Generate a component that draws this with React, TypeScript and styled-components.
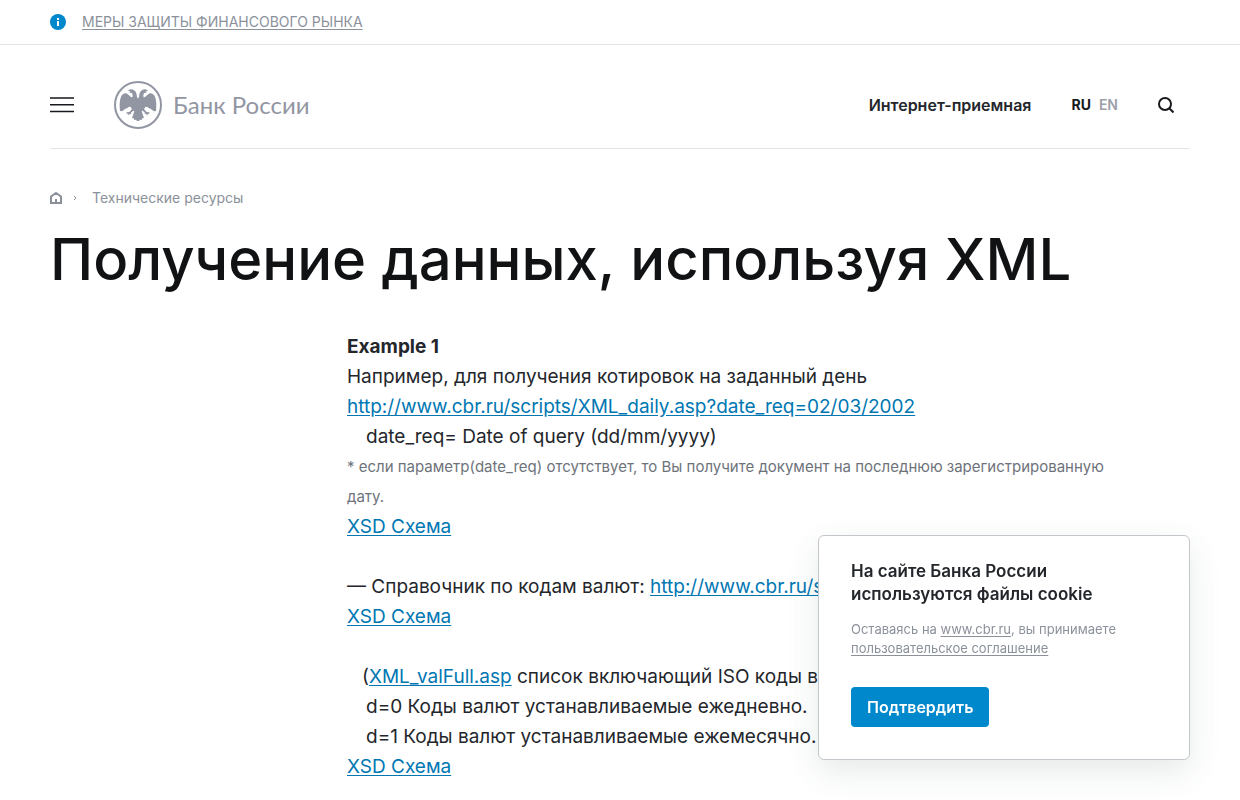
import React from "react";
import styled, { createGlobalStyle } from "styled-components";

const GlobalStyle = createGlobalStyle`
  *, *::before, *::after { box-sizing: border-box; }
  body {
    margin: 0;
    background: #fff;
    color: #23262b;
    font-family: Inter, "Liberation Sans", sans-serif;
  }
`;

const Container = styled.div`
  padding: 0 50px;
`;

const Notice = styled.div`
  display: flex;
  align-items: center;
  gap: 16px;
  height: 45px;
  padding: 0 50px;
  border-bottom: 1px solid #e3e5e6;
`;

const NoticeLink = styled.a`
  font-size: 14px;
  line-height: 20px;
  color: #8b919b;
  text-underline-offset: 2px;
`;

const Header = styled.header`
  display: flex;
  align-items: center;
  height: 104px;
  padding-top: 16px;
  border-bottom: 1px solid #e3e5e6;
`;

const IconButton = styled.button`
  display: flex;
  padding: 0;
  border: 0;
  background: none;
  color: #17191c;
  cursor: pointer;
`;

const Logo = styled.a`
  display: flex;
  align-items: center;
  gap: 10px;
  margin-left: 40px;
  color: #9296a3;
  text-decoration: none;
`;

const Wordmark = styled.span`
  font-family: Lato, sans-serif;
  font-size: 24px;
  line-height: 32px;
  white-space: nowrap;
`;

const HeaderNav = styled.nav`
  display: flex;
  align-items: center;
  gap: 40px;
  margin-left: auto;
  padding-right: 16px;
`;

const ReceptionLink = styled.a`
  font-size: 16px;
  line-height: 24px;
  font-weight: 600;
  color: #23262b;
  text-decoration: none;
`;

const Languages = styled.div`
  display: flex;
  gap: 8px;
`;

const Language = styled.a<{ $active?: boolean }>`
  font-size: 14px;
  line-height: 20px;
  font-weight: ${(p) => (p.$active ? 700 : 600)};
  color: ${(p) => (p.$active ? "#17191c" : "#9ba0a8")};
  text-decoration: none;
`;

const Breadcrumbs = styled.nav`
  display: flex;
  align-items: center;
  margin-top: 39px;
  font-size: 14px;
  line-height: 20px;
`;

const Crumb = styled.a`
  display: flex;
  color: #8b919b;
  text-decoration: none;
`;

const Separator = styled.svg`
  margin: 0 15px 0 12px;
`;

const Title = styled.h1`
  margin: 17px 0 0;
  font-size: 58px;
  line-height: 68px;
  font-weight: 500;
  color: #101214;
`;

const Article = styled.main`
  max-width: 1060px;
  margin-top: 39px;
  padding-left: 297px;
  font-size: 19px;
  line-height: 30px;
`;

const Paragraph = styled.p<{ $indent?: number }>`
  margin: 0;
  padding-left: ${(p) => p.$indent ?? 0}px;
`;

const Block = styled.section`
  margin-bottom: 30px;
`;

const ExampleTitle = styled.h2`
  margin: 0;
  font-size: 19px;
  line-height: 30px;
  font-weight: 700;
`;

const Note = styled.p`
  margin: 0;
  font-size: 15px;
  line-height: 30px;
  color: #6e737b;
`;

const TextLink = styled.a`
  color: #0077b3;
  text-underline-offset: 2px;
`;

const CookiePanel = styled.aside`
  position: fixed;
  right: 50px;
  bottom: 40px;
  width: 372px;
  padding: 24px 32px 32px;
  border: 1px solid #c3c6ca;
  border-radius: 6px;
  background: #fff;
  box-shadow: 0 12px 32px rgba(60, 80, 80, 0.12);
`;

const CookieTitle = styled.h2`
  margin: 0;
  font-size: 17px;
  line-height: 23px;
  font-weight: 600;
`;

const CookieText = styled.p`
  margin: 14px 0 29px;
  font-size: 13px;
  line-height: 19px;
  color: #8b919b;
`;

const CookieLink = styled.a`
  color: inherit;
  text-underline-offset: 2px;
`;

const ConfirmButton = styled.button`
  display: block;
  height: 40px;
  padding: 0 16px;
  border: 0;
  border-radius: 4px;
  background: #0088cc;
  color: #fff;
  font-family: inherit;
  font-size: 16px;
  line-height: 24px;
  font-weight: 600;
  cursor: pointer;
`;

const EAGLE_HALF =
  "M72.5 54 L69 47 C68 38 66 30 59 27 C53 23 46 25 42 30 L49 31 L46 36 L52 35 C56 38 57 43 55 49 C50 50 46 42 39 38 C32 35 24 40 21 47 C17 57 16 72 18 90 L23 91 L29 88 L34 83 L39 82 L44 78 L49 77 L54 84 L47 92 L42 94 L35 92 L40 96 L36 100 L42 98 L45 104 L47 98 L52 100 L51 95 L58 89 L61 91 L54 111 L59 112 L61 117 L66 116 L69 120 L72.5 120 Z";

function Emblem() {
  return (
    <svg width="49" height="48" viewBox="0 0 147 144" aria-hidden="true">
      <circle cx="72" cy="72" r="69" fill="none" stroke="currentColor" strokeWidth="6" />
      <path d={EAGLE_HALF} fill="currentColor" />
      <path d={EAGLE_HALF} fill="currentColor" transform="translate(144 0) scale(-1 1)" />
    </svg>
  );
}

export default function App() {
  return (
    <>
      <GlobalStyle />
      <Notice>
        <svg width="16" height="16" viewBox="0 0 16 16" aria-hidden="true">
          <circle cx="8" cy="8" r="8" fill="#0088cc" />
          <path d="M7 4h2v2H7zM7 7h2v5H7z" fill="#fff" />
        </svg>
        <NoticeLink href="#">МЕРЫ ЗАЩИТЫ ФИНАНСОВОГО РЫНКА</NoticeLink>
      </Notice>
      <Container>
        <Header>
          <IconButton type="button" aria-label="Меню">
            <svg width="24" height="16" viewBox="0 0 24 16" aria-hidden="true">
              <path d="M0 1h24M0 7.75h24M0 14.5h24" stroke="currentColor" strokeWidth="1.7" />
            </svg>
          </IconButton>
          <Logo href="#">
            <Emblem />
            <Wordmark>Банк России</Wordmark>
          </Logo>
          <HeaderNav>
            <ReceptionLink href="#">Интернет-приемная</ReceptionLink>
            <Languages>
              <Language href="#" $active>RU</Language>
              <Language href="#">EN</Language>
            </Languages>
            <IconButton type="button" aria-label="Поиск">
              <svg width="16" height="16" viewBox="0 0 16 16" fill="none" stroke="currentColor" strokeWidth="2" aria-hidden="true">
                <circle cx="7" cy="7" r="6" />
                <path d="M11 11l4.5 4.5" />
              </svg>
            </IconButton>
          </HeaderNav>
        </Header>
        <Breadcrumbs aria-label="Навигация">
          <Crumb href="#" aria-label="Главная">
            <svg width="12" height="12" viewBox="0 0 12 12" fill="none" stroke="currentColor" strokeWidth="2" aria-hidden="true">
              <path d="M1 11V4.5L6 1l5 3.5V11zM6 11V7" />
            </svg>
          </Crumb>
          <Separator width="3" height="4" viewBox="0 0 3 4" aria-hidden="true">
            <path d="M0 0l2 2-2 2" fill="none" stroke="#8b919b" />
          </Separator>
          <Crumb href="#">Технические ресурсы</Crumb>
        </Breadcrumbs>
        <Title>Получение данных, используя XML</Title>
        <Article>
          <Block>
            <ExampleTitle>Example 1</ExampleTitle>
            <Paragraph>Например, для получения котировок на заданный день</Paragraph>
            <Paragraph>
              <TextLink href="#">http://www.cbr.ru/scripts/XML_daily.asp?date_req=02/03/2002</TextLink>
            </Paragraph>
            <Paragraph $indent={19}>date_req= Date of query (dd/mm/yyyy)</Paragraph>
            <Note>
              * если параметр(date_req) отсутствует, то Вы получите документ на последнюю зарегистрированную дату.
            </Note>
            <Paragraph><TextLink href="#">XSD Схема</TextLink></Paragraph>
          </Block>
          <Block>
            <Paragraph>
              — Справочник по кодам валют: <TextLink href="#">http://www.cbr.ru/scripts/XML_val.asp?d=0</TextLink>
            </Paragraph>
            <Paragraph><TextLink href="#">XSD Схема</TextLink></Paragraph>
          </Block>
          <Paragraph $indent={15}>
            (<TextLink href="#">XML_valFull.asp</TextLink> список включающий ISO коды валют)
          </Paragraph>
          <Paragraph $indent={19}>d=0 Коды валют устанавливаемые ежедневно.</Paragraph>
          <Paragraph $indent={19}>d=1 Коды валют устанавливаемые ежемесячно.</Paragraph>
          <Paragraph><TextLink href="#">XSD Схема</TextLink></Paragraph>
        </Article>
      </Container>
      <CookiePanel aria-label="Файлы cookie">
        <CookieTitle>На сайте Банка России используются файлы cookie</CookieTitle>
        <CookieText>
          Оставаясь на <CookieLink href="#">www.cbr.ru</CookieLink>, вы принимаете{" "}
          <CookieLink href="#">пользовательское соглашение</CookieLink>
        </CookieText>
        <ConfirmButton type="button">Подтвердить</ConfirmButton>
      </CookiePanel>
    </>
  );
}
